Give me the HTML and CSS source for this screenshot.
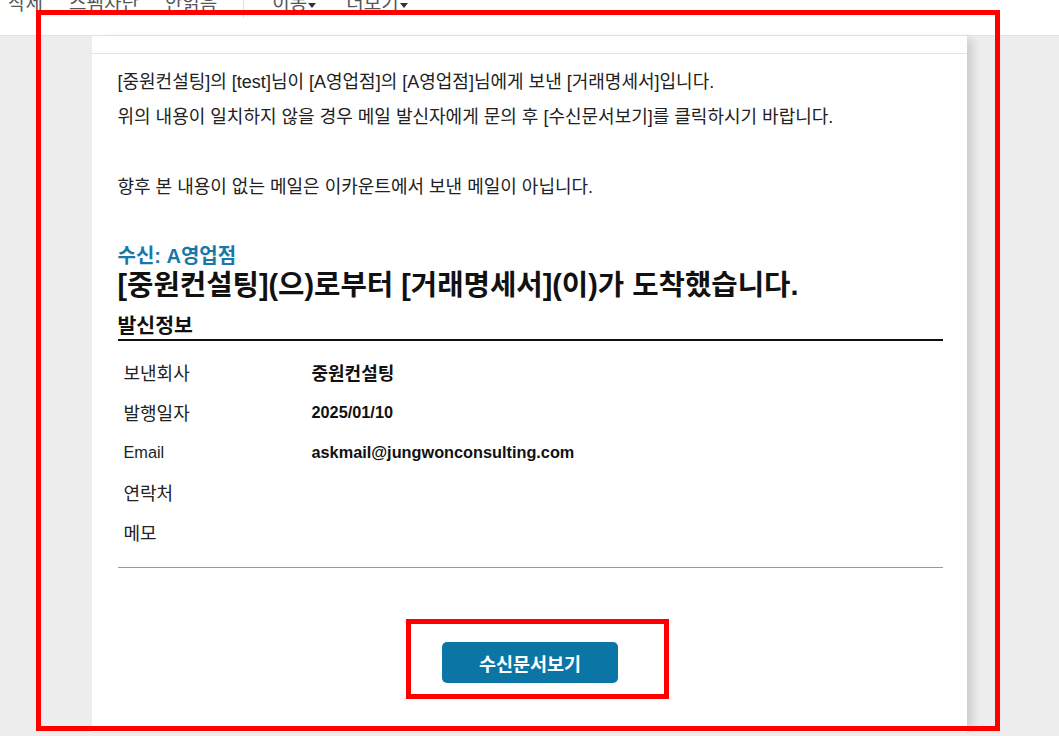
FILE: index.html
```html
<!DOCTYPE html>
<html lang="ko">
<head>
    <meta charset="UTF-8">
    <meta name="viewport" content="width=device-width, initial-scale=1.0">
    <title>수신문서 알림</title>
    <link rel="stylesheet" href="styles.css">
</head>
<body>

<!-- Mail toolbar (scrolled, top half hidden) -->
<div class="toolbar">
    <div class="toolbar-inner">
        <span class="tool">삭제</span>
        <span class="tool">스팸차단</span>
        <span class="tool">안읽음</span>
        <span class="tool-sep"></span>
        <span class="tool tool-menu">이동<i class="caret"></i></span>
        <span class="tool tool-menu">더보기<i class="caret"></i></span>
    </div>
</div>

<!-- Mail content -->
<div class="viewer">
    <div class="mail-card">
        <div class="card-top"></div>
        <div class="mail-body">
            <p class="notice">
                [중원컨설팅]의 [test]님이 [A영업점]의 [A영업점]님에게 보낸 [거래명세서]입니다.<br>
                위의 내용이 일치하지 않을 경우 메일 발신자에게 문의 후 [수신문서보기]를 클릭하시기 바랍니다.<br>
                <br>
                향후 본 내용이 없는 메일은 이카운트에서 보낸 메일이 아닙니다.
            </p>

            <div class="receiver">수신: A영업점</div>
            <h1 class="headline">[중원컨설팅](으)로부터 [거래명세서](이)가 도착했습니다.</h1>

            <h2 class="section-title">발신정보</h2>
            <table class="sender-info">
                <tr><th>보낸회사</th><td>중원컨설팅</td></tr>
                <tr><th>발행일자</th><td class="latin">2025/01/10</td></tr>
                <tr><th class="latin">Email</th><td class="latin">askmail@jungwonconsulting.com</td></tr>
                <tr><th>연락처</th><td></td></tr>
                <tr><th>메모</th><td></td></tr>
            </table>

            <div class="actions">
                <button type="button" class="view-btn">수신문서보기</button>
            </div>
        </div>
    </div>
</div>

<!-- Highlight marks -->
<div class="mark mark-outer"></div>
<div class="mark mark-button"></div>

</body>
</html>
```

FILE: styles.css
```css
/* General */
body {
    margin: 0;
    background-color: #ededed;
    font-family: "Liberation Sans", "Noto Sans CJK KR", sans-serif;
    color: #222;
    overflow: hidden;
}

/* Toolbar */
.toolbar {
    height: 35px;
    background-color: #fff;
    border-bottom: 1px solid #e3e3e3;
    overflow: hidden;
}

.toolbar-inner {
    display: flex;
    align-items: flex-start;
    margin-top: -7px;
    padding-left: 8px;
    font-size: 19px;
    line-height: 22px;
    color: #555;
}

.tool {
    margin-right: 26px;
    white-space: nowrap;
}

.tool-menu {
    margin-right: 30px;
}

.tool-sep {
    width: 1px;
    height: 25px;
    background-color: #e0e0e0;
    margin-right: 28px;
}

.caret {
    display: inline-block;
    width: 0;
    height: 0;
    border-left: 4px solid transparent;
    border-right: 4px solid transparent;
    border-top: 5px solid #333;
    margin-left: 1px;
    vertical-align: 2px;
}

/* Mail card */
.viewer {
    display: flex;
    justify-content: center;
    padding-right: 1px;
}

.mail-card {
    width: 875px;
    background-color: #fff;
    box-shadow: 9px 0 8px -3px rgba(0, 0, 0, 0.13);
    border-bottom: 1px solid #e3e3e3;
}

.card-top {
    height: 17px;
    border-bottom: 1px solid #e3e3e3;
}

.mail-body {
    padding: 11px 24px 49px 26px;
}

.notice {
    margin: 0;
    font-size: 18px;
    line-height: 35px;
}

.receiver {
    margin-top: 39px;
    font-size: 20px;
    line-height: 24px;
    font-weight: bold;
    color: #1a78a8;
}

.headline {
    margin: 0;
    font-size: 28.7px;
    line-height: 34px;
    font-weight: bold;
    color: #111;
}

.section-title {
    margin: 11px 0 0;
    font-size: 20.5px;
    line-height: 26px;
    font-weight: bold;
    color: #111;
    border-bottom: 2px solid #111;
}

/* Sender table */
.sender-info {
    width: 100%;
    margin-top: 11px;
    border-collapse: collapse;
    border-bottom: 1px solid #999;
}

.sender-info th,
.sender-info td {
    height: 40px;
    padding: 0 6px;
    font-size: 18px;
    text-align: left;
    vertical-align: middle;
}

.sender-info th {
    width: 176px;
    font-weight: normal;
    color: #222;
}

.sender-info td {
    font-weight: bold;
    color: #111;
}

.sender-info .latin {
    font-size: 16.3px;
}

.sender-info tr:last-child th,
.sender-info tr:last-child td {
    padding-bottom: 15px;
}

/* Button */
.actions {
    display: flex;
    justify-content: center;
    padding-top: 74px;
}

.view-btn {
    width: 176px;
    height: 41px;
    border: none;
    border-radius: 5px;
    background-color: #0b76a6;
    color: #fff;
    font-family: inherit;
    font-size: 18.5px;
    font-weight: bold;
}

/* Red highlight marks (overlay) */
.mark {
    position: absolute;
    box-sizing: border-box;
    border: 5px solid #ff0000;
    pointer-events: none;
}

.mark-outer {
    left: 36px;
    top: 10px;
    width: 964px;
    height: 721px;
}

.mark-button {
    left: 406px;
    top: 619px;
    width: 263px;
    height: 80px;
}
```
